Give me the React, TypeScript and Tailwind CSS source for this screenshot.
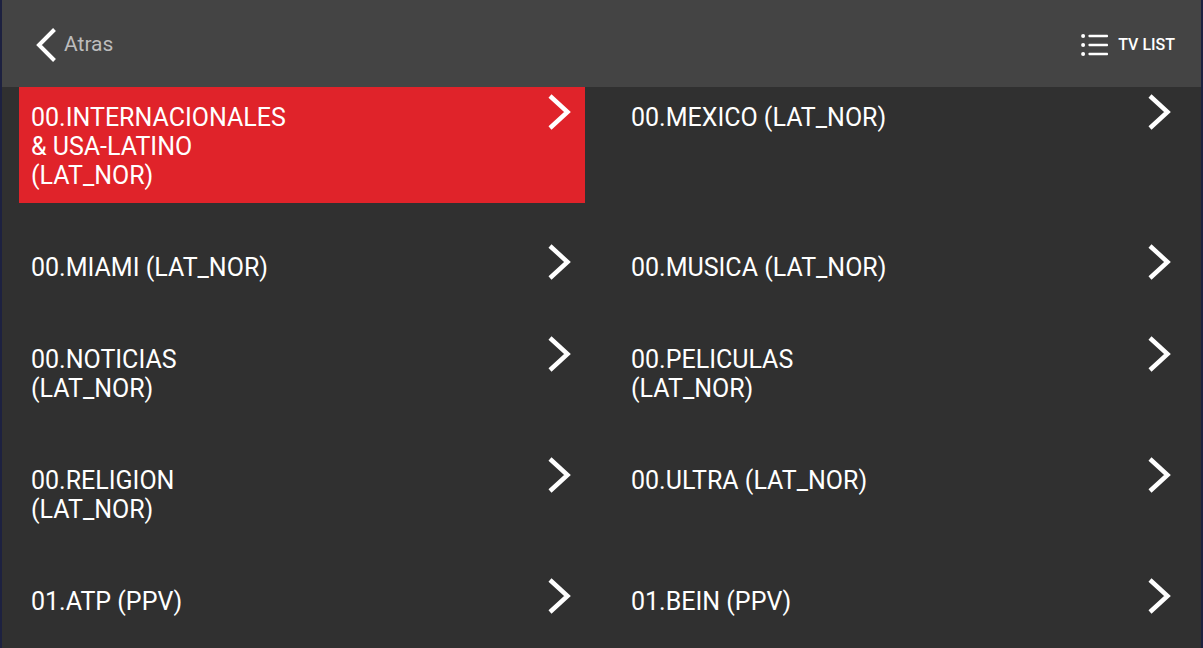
import React from "react";

const items: string[][] = [
  ["00.INTERNACIONALES", "& USA-LATINO", "(LAT_NOR)"],
  ["00.MEXICO (LAT_NOR)"],
  ["00.MIAMI (LAT_NOR)"],
  ["00.MUSICA (LAT_NOR)"],
  ["00.NOTICIAS", "(LAT_NOR)"],
  ["00.PELICULAS", "(LAT_NOR)"],
  ["00.RELIGION", "(LAT_NOR)"],
  ["00.ULTRA (LAT_NOR)"],
  ["01.ATP (PPV)"],
  ["01.BEIN (PPV)"],
];

function Chevron() {
  return (
    <svg width="26" height="38" viewBox="0 0 26 38" className="mt-[6px] shrink-0">
      <path d="M4 3 L21.5 19 L4 35" fill="none" stroke="white" strokeWidth="4.5" strokeLinecap="butt" strokeLinejoin="miter" />
    </svg>
  );
}

export default function App() {
  return (
    <div
      className="w-[1203px] h-[648px] flex flex-col border-x-2 border-[#1d2140] bg-[#303030] overflow-hidden"
      style={{ fontFamily: "Roboto, 'Liberation Sans', sans-serif" }}
    >
      <div className="h-[87px] shrink-0 bg-[#444444] flex items-center justify-between pl-[32px] pr-[26px] pt-[2px]">
        <div className="flex items-center gap-[5px]">
          <svg width="25" height="36" viewBox="0 0 25 36">
            <path d="M20.5 2.5 L5 18 L20.5 33.5" fill="none" stroke="white" strokeWidth="4" strokeLinecap="butt" strokeLinejoin="miter" />
          </svg>
          <span className="text-[21px] text-[#bdbdbd] leading-none">Atras</span>
        </div>
        <div className="flex items-center gap-[10px]">
          <svg width="27" height="22" viewBox="0 0 27 22">
            <circle cx="2.1" cy="2" r="2" fill="white" />
            <circle cx="2.1" cy="11" r="2" fill="white" />
            <circle cx="2.1" cy="20" r="2" fill="white" />
            <rect x="7.5" y="0.7" width="19.5" height="2.6" rx="0.8" fill="white" />
            <rect x="7.5" y="9.7" width="19.5" height="2.6" rx="0.8" fill="white" />
            <rect x="7.5" y="18.7" width="19.5" height="2.6" rx="0.8" fill="white" />
          </svg>
          <span className="text-[16px] font-medium text-white leading-none">TV LIST</span>
        </div>
      </div>
      <div className="flex-1 grid grid-cols-2 gap-x-[34px] gap-y-[34px] pl-[17px] pr-[16px] content-start">
        {items.map((lines, i) => (
          <div
            key={i}
            className={`flex items-start justify-between pl-[12px] pr-[13px] ${i === 0 ? "bg-[#e0232a]" : ""}`}
          >
            <div className="pt-[16px] pb-[13px] text-[25px] leading-[29px] text-white">
              {lines.map((l, j) => (
                <div key={j}>{l}</div>
              ))}
            </div>
            <Chevron />
          </div>
        ))}
      </div>
    </div>
  );
}
